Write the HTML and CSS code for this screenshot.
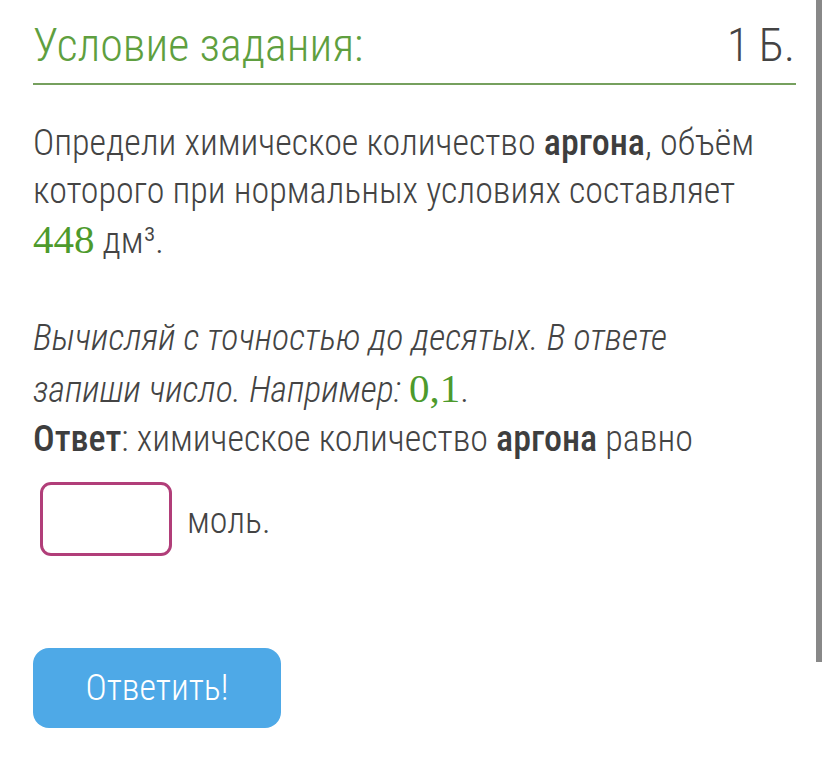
FILE: index.html
```html
<!DOCTYPE html>
<html lang="ru">
<head>
<meta charset="utf-8">
<link rel="stylesheet" href="styles.css">
</head>
<body>
<div class="page">
  <div class="head">
    <span class="title">Условие задания:</span>
    <span class="score">1 Б.</span>
  </div>
  <div class="body">
    <p class="task">Определи химическое количество <b>аргона</b>, объём которого при нормальных условиях составляет <span class="num">448</span> дм³.</p>
    <p class="hint"><i>Вычисляй с точностью до десятых. В ответе запиши число. Например:</i> <span class="num n2">0,1</span>.</p>
    <p class="answer"><b>Ответ</b>: химическое количество <b>аргона</b> равно</p>
    <div class="input-row">
      <span class="box"></span>
      <span class="unit">моль.</span>
    </div>
    <button class="btn">Ответить!</button>
  </div>
</div>
<div class="scrollbar"></div>
</body>
</html>
```
FILE: styles.css
```css
html, body {
  margin: 0;
  background: #fff;
}
body {
  font-family: Roboto, "Noto Sans", sans-serif;
  font-weight: 300;
  font-stretch: 85%;
  color: #444;
}
.page {
  width: 763px;
  padding: 0 0 0 33px;
}
.head {
  display: flex;
  justify-content: space-between;
  align-items: baseline;
  height: 85px;
  box-sizing: border-box;
  padding-top: 19px;
  border-bottom: 2px solid #76a05e;
}
.title {
  color: #5f9f3f;
  font-size: 46px;
  line-height: 52px;
}
.score {
  color: #444;
  font-size: 46px;
  line-height: 52px;
  word-spacing: -1px;
  padding-right: 1px;
}
.body {
  width: 725px;
}
.task, .hint, .answer {
  font-size: 36px;
  line-height: 48px;
  margin: 0;
}
.task {
  margin-top: 34px;
}
.hint {
  margin-top: 48px;
  line-height: 50px;
}
.answer {
  margin-top: 0;
}
b {
  font-weight: 500;
  color: #3e3e3e;
}
.num {
  font-family: "Liberation Serif", serif;
  color: #4d9a2c;
  font-size: 41px;
  font-weight: 400;
  font-stretch: normal;
  font-style: normal;
}
.input-row {
  display: flex;
  align-items: center;
  gap: 15px;
  margin-top: 19px;
  margin-left: 7px;
}
.box {
  width: 132px;
  height: 74px;
  box-sizing: border-box;
  border: 3px solid #b13e79;
  border-radius: 11px;
}
.unit {
  font-size: 36px;
  margin-top: 4px;
}
.btn {
  display: block;
  margin-top: 92px;
  width: 248px;
  height: 80px;
  border: 0;
  border-radius: 16px;
  background: #4ea9e7;
  color: #fff;
  font-family: Roboto, sans-serif;
  font-weight: 300;
  font-stretch: 85%;
  font-size: 36px;
  padding: 0;
}
.scrollbar {
  position: fixed;
  top: 0;
  left: 816px;
  width: 6px;
  height: 662px;
  background: #888;
}
```
